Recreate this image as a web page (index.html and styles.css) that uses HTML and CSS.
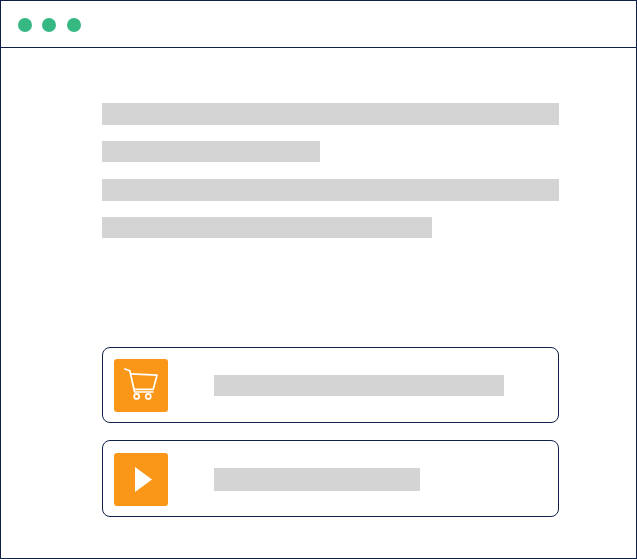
FILE: index.html
```html
<!DOCTYPE html>
<html lang="en">

<head>
    <meta charset="UTF-8">
    <title>Browser window</title>
    <link rel="stylesheet" href="styles.css">
</head>

<body>
    <div class="window">
        <div class="title-bar">
            <span class="dot"></span>
            <span class="dot"></span>
            <span class="dot"></span>
        </div>
        <div class="content">
            <div class="text-lines">
                <div class="line line-full line-tall"></div>
                <div class="line line-short"></div>
                <div class="line line-full line-tall"></div>
                <div class="line line-medium"></div>
            </div>
            <div class="cards">
                <div class="card card-cart">
                    <div class="card-icon">
                        <svg width="36" height="34" viewBox="0 0 36 34" fill="none" stroke="#fff" stroke-width="1.7">
                            <path d="M2 1 L6.8 2.8 L11.6 24 H30" stroke-linecap="round" stroke-linejoin="round" />
                            <path d="M8 5.8 L34 7.2 L30.2 21.4 H11" stroke-linejoin="round" />
                            <circle cx="13.7" cy="28.4" r="2.5" />
                            <circle cx="25.3" cy="28.4" r="2.5" />
                        </svg>
                    </div>
                    <div class="card-line card-line-long"></div>
                </div>
                <div class="card card-play">
                    <div class="card-icon">
                        <svg class="play-icon" width="17" height="25" viewBox="0 0 17 25">
                            <polygon points="0,0 17,12.5 0,25" fill="#fff" />
                        </svg>
                    </div>
                    <div class="card-line card-line-short"></div>
                </div>
            </div>
        </div>
    </div>
</body>

</html>
```

FILE: styles.css
```css
html {
    height: 100%;
}

body {
    margin: 0;
    height: 100%;
    background-color: #fff;
}

.window {
    box-sizing: border-box;
    width: 637px;
    height: 559px;
    border: 1px solid #0f2149;
}

.title-bar {
    box-sizing: border-box;
    height: 47px;
    padding: 17px 0 0 17px;
    display: flex;
    gap: 10px;
    border-bottom: 1px solid #0f2149;
}

.dot {
    width: 14px;
    height: 14px;
    border-radius: 50%;
    background-color: #36b882;
}

.dot:last-child {
    margin-left: 1px;
}

.content {
    width: 457px;
    padding: 55px 0 0 101px;
}

.text-lines {
    display: flex;
    flex-direction: column;
    gap: 16px;
}

.line {
    height: 21px;
    background-color: #d4d4d4;
}

.line-tall {
    height: 22px;
}

.line-full {
    width: 457px;
}

.line-short {
    width: 218px;
    margin-bottom: 1px;
}

.line-medium {
    width: 330px;
}

.cards {
    margin-top: 109px;
    display: flex;
    flex-direction: column;
    gap: 17px;
}

.card {
    box-sizing: border-box;
    display: flex;
    align-items: center;
    gap: 46px;
    padding-left: 11px;
    border: 1px solid #0f2149;
    border-radius: 8px;
}

.card-cart {
    height: 76px;
}

.card-play {
    height: 77px;
    padding-top: 2px;
}

.card-icon {
    width: 54px;
    height: 53px;
    display: flex;
    align-items: center;
    justify-content: center;
    border-radius: 3px;
    background-color: #fa9719;
}

.play-icon {
    margin-left: 5px;
}

.card-line {
    background-color: #d4d4d4;
}

.card-line-long {
    width: 290px;
    height: 21px;
}

.card-line-short {
    width: 206px;
    height: 23px;
}
```
